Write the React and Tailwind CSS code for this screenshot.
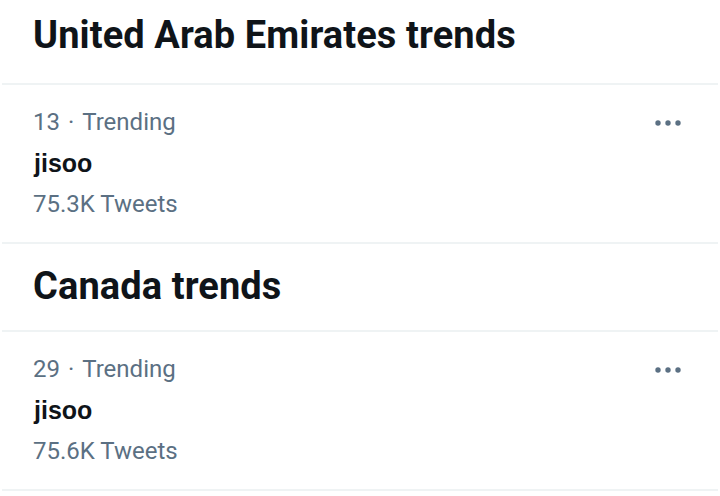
export default function App() {
  const Dots = () => (
    <svg width="28" height="8" viewBox="0 0 28 8" className="fill-[#5b7083]">
      <circle cx="4" cy="4" r="2.7" />
      <circle cx="14" cy="4" r="2.7" />
      <circle cx="24" cy="4" r="2.7" />
    </svg>
  );
  const Heading = ({ children, h }) => (
    <div className={`${h} flex items-center px-[31px] border-b-2 border-[#eff3f4] mx-[2px]`}>
      <h2 className="text-[38px] font-bold text-[#0f1419] tracking-[0.1px] leading-none">{children}</h2>
    </div>
  );
  const Row = ({ rank, count }) => (
    <div className="h-[159px] flex justify-between px-[31px] border-b-2 border-[#eff3f4] mx-[2px]">
      <div className="flex flex-col pt-[16px]">
        <div className="text-[24px] leading-[42px] text-[#5b7083]">
          {rank}
          <span className="px-[8px]">·</span>
          Trending
        </div>
        <div className="text-[25px] leading-[40px] font-bold text-[#0f1419] font-['Liberation_Sans',sans-serif] pl-[1px]">jisoo</div>
        <div className="text-[24px] leading-[42px] text-[#5b7083]">{count} Tweets</div>
      </div>
      <div className="pt-[34px] pr-[5px]">
        <Dots />
      </div>
    </div>
  );
  return (
    <div className="w-[720px] h-[496px] bg-white overflow-hidden font-['Roboto',sans-serif]">
      <Heading h="h-[85px] pb-[13px]">United Arab Emirates trends</Heading>
      <Row rank="13" count="75.3K" />
      <Heading h="h-[88px] pb-[3px]">Canada trends</Heading>
      <Row rank="29" count="75.6K" />
    </div>
  );
}
